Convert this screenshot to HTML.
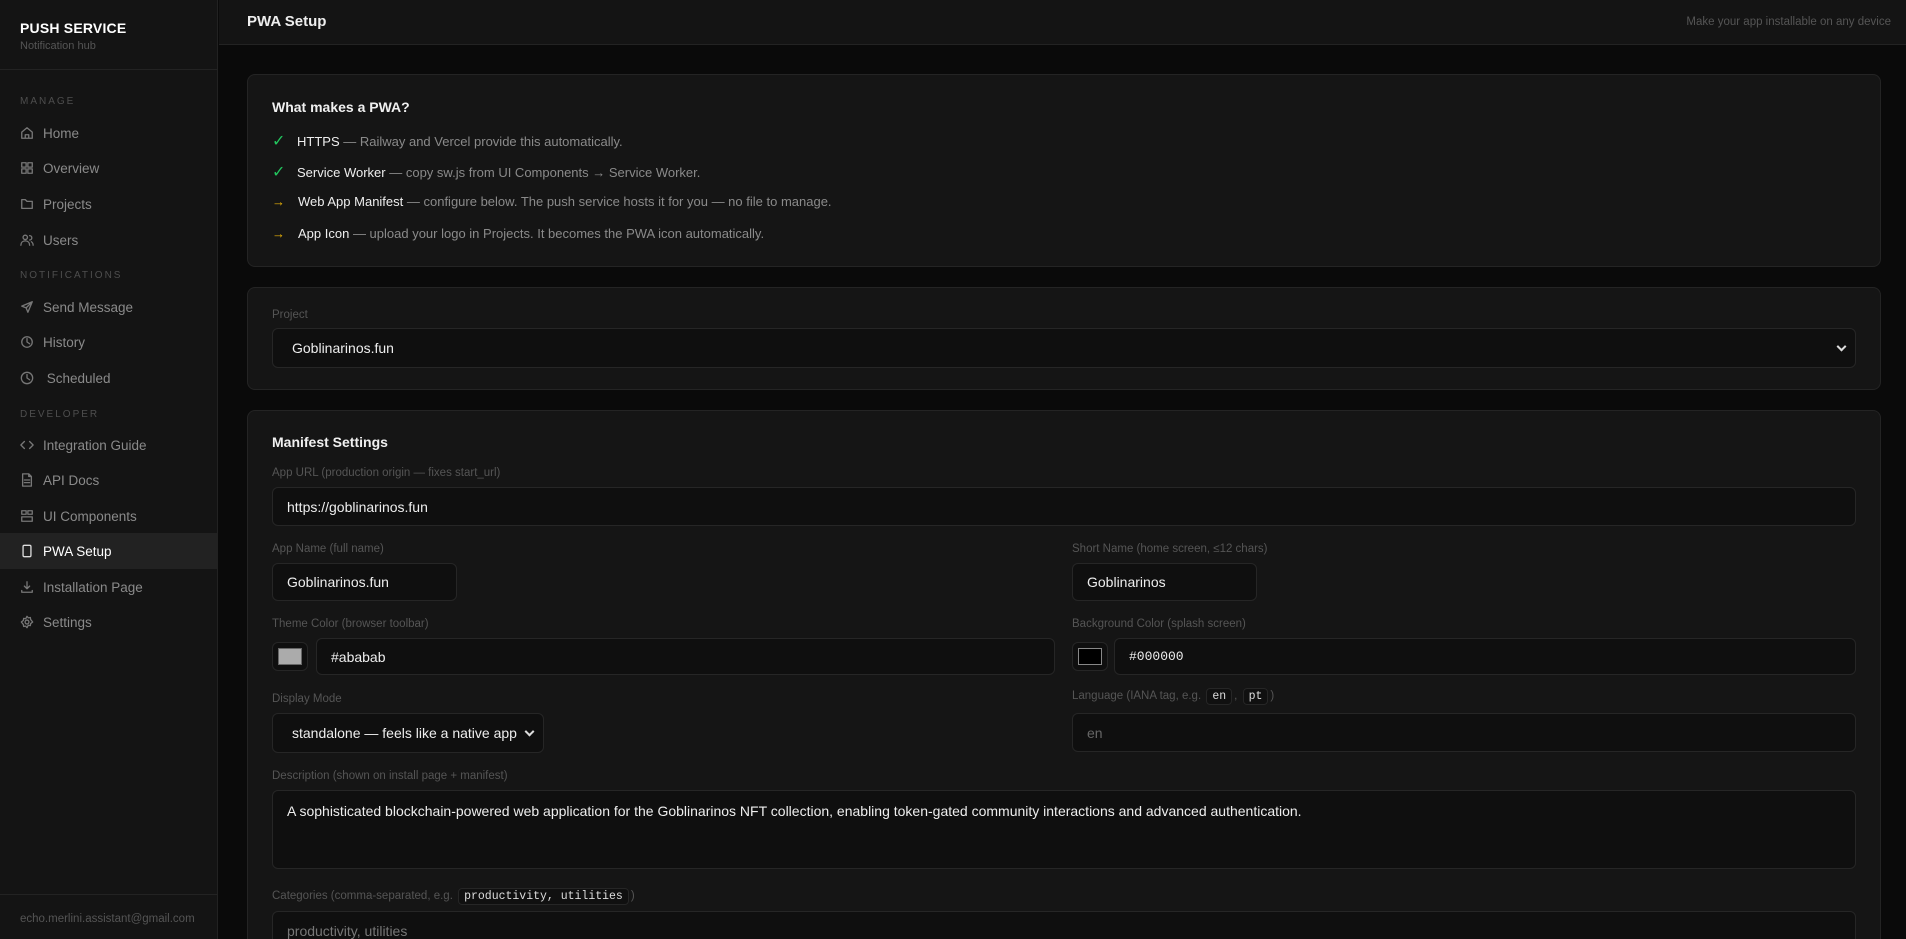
<!DOCTYPE html>
<html style="width:1906px;height:939px;overflow:hidden"><head><meta charset="utf-8"><style>
*{box-sizing:border-box;margin:0;padding:0}
body{width:1906px;height:939px;overflow:hidden;background:#0a0a0a;font-family:"Liberation Sans",sans-serif;color:#e5e5e5;position:relative}
.side{position:absolute;left:0;top:0;width:218px;height:939px;background:#141414;border-right:1px solid #222}
.brand{position:absolute;left:20px;top:20px;font-weight:bold;font-size:14px;color:#fff;letter-spacing:.2px}
.sub{position:absolute;left:20px;top:40px;font-size:11px;color:#555}
.hr{position:absolute;left:0;width:218px;height:1px;background:#232323}
.sec{position:absolute;left:20px;font-size:10px;letter-spacing:2px;color:#4e4e4e}
.nav{position:absolute;left:0;width:218px;height:36px;display:flex;align-items:center;padding-left:20px;font-size:13.5px;color:#8a8a8a}
.nav svg{width:14px;height:14px;margin-right:9px;fill:none;stroke:#777;stroke-width:1.5;stroke-linecap:round;stroke-linejoin:round}
.nav.act{background:#222;color:#fff}.nav.act svg{stroke:#ddd}
.email{position:absolute;left:20px;top:913px;font-size:11.5px;color:#555}
.head{position:absolute;left:219px;top:0;right:0;height:45px;background:#141414;border-bottom:1px solid #232323}
.head h1{position:absolute;left:28px;top:13px;font-size:15px;font-weight:bold;color:#eee}
.head span{position:absolute;right:15px;top:16px;font-size:11.5px;color:#555}
.card{position:absolute;left:247px;width:1634px;background:#151515;border:1px solid #242424;border-radius:8px}
.t{position:absolute;font-size:14px;font-weight:bold;color:#f0f0f0}
.li{position:absolute;left:24px;font-size:13px;color:#8a8a8a;white-space:nowrap}
.li b{font-weight:normal;color:#eee}
.ck{color:#22c55e;font-size:16px;display:inline-block;width:25px}
.ar{color:#eab308;font-size:13px;display:inline-block;width:26px}
.lab{position:absolute;font-size:11.5px;color:#555;white-space:nowrap}
.in{position:absolute;background:#0f0f0f;border:1px solid #262626;border-radius:6px;font-size:14px;color:#eee;padding-left:14px;display:flex;align-items:center}
.code{font-family:"Liberation Mono",monospace;font-size:11.5px;color:#ddd;background:#101010;border:1px solid #262626;border-radius:4px;padding:1px 5px;margin:0 2px}
.chev{position:absolute;right:10px;top:50%;width:7px;height:7px;border-right:2px solid #ddd;border-bottom:2px solid #ddd;transform:translateY(-70%) rotate(45deg)}
</style></head><body>
<div class="side">
<div class="brand">PUSH SERVICE</div>
<div class="sub">Notification hub</div>
<div class="hr" style="top:69px"></div>
<div class="sec" style="top:96px">MANAGE</div>
<div class="nav" style="top:115px"><svg viewBox="0 0 16 16"><path d="M2 7l6-5 6 5v7H2z M6 14v-4h4v4"/></svg>Home</div>
<div class="nav" style="top:150px"><svg viewBox="0 0 16 16"><rect x="2" y="2" width="5" height="5"/><rect x="9" y="2" width="5" height="5"/><rect x="2" y="9" width="5" height="5"/><rect x="9" y="9" width="5" height="5"/></svg>Overview</div>
<div class="nav" style="top:186px"><svg viewBox="0 0 16 16"><path d="M2 3h4l2 2h6v8H2z"/></svg>Projects</div>
<div class="nav" style="top:222px"><svg viewBox="0 0 16 16"><circle cx="6" cy="5" r="2.5"/><path d="M1 14c0-3 2-5 5-5s5 2 5 5M11 3a2.5 2.5 0 010 5M13 10c1.5 1 2 2.5 2 4"/></svg>Users</div>
<div class="sec" style="top:270px">NOTIFICATIONS</div>
<div class="nav" style="top:289px"><svg viewBox="0 0 16 16"><path d="M14 2L2 7l5 2 2 5zM14 2L7 9"/></svg>Send Message</div>
<div class="nav" style="top:324px"><svg viewBox="0 0 16 16"><circle cx="8" cy="8" r="6"/><path d="M8 4v4l3 2"/></svg>History</div>
<div class="nav" style="top:360px"><svg viewBox="0 0 16 16"><circle cx="8" cy="8" r="6.5"/><path d="M8 4v4l3 2"/></svg>&nbsp;Scheduled</div>
<div class="sec" style="top:409px">DEVELOPER</div>
<div class="nav" style="top:427px"><svg viewBox="0 0 16 16"><path d="M5 4L1 8l4 4M11 4l4 4-4 4"/></svg>Integration Guide</div>
<div class="nav" style="top:462px"><svg viewBox="0 0 16 16"><path d="M3 1h7l3 3v11H3zM10 1v3h3M5 8h6M5 11h6"/></svg>API Docs</div>
<div class="nav" style="top:498px"><svg viewBox="0 0 16 16"><rect x="2" y="2" width="5" height="4"/><rect x="9" y="2" width="5" height="4"/><rect x="2" y="9" width="12" height="5"/></svg>UI Components</div>
<div class="nav act" style="top:533px"><svg viewBox="0 0 16 16"><rect x="3.5" y="1.5" width="9" height="13" rx="1.5"/></svg>PWA Setup</div>
<div class="nav" style="top:569px"><svg viewBox="0 0 16 16"><path d="M8 2v8M5 7l3 3 3-3M2 12v2h12v-2"/></svg>Installation Page</div>
<div class="nav" style="top:604px"><svg viewBox="0 0 16 16"><circle cx="8" cy="8" r="2.2"/><path d="M8 1.5l1.5 1.8 2.3-.4.4 2.3L14.5 8l-2.3 1.8-.4 2.3-2.3-.4L8 14.5l-1.5-1.8-2.3.4-.4-2.3L1.5 8l2.3-1.8.4-2.3 2.3.4z"/></svg>Settings</div>
<div class="hr" style="top:894px"></div>
<div class="email">echo.merlini.assistant@gmail.com</div>
</div>
<div class="head"><h1>PWA Setup</h1><span>Make your app installable on any device</span></div>

<div class="card" style="top:74px;height:193px">
<div class="t" style="left:24px;top:24px">What makes a PWA?</div>
<div class="li" style="top:56px"><span class="ck">✓</span><b>HTTPS</b> — Railway and Vercel provide this automatically.</div>
<div class="li" style="top:87px"><span class="ck">✓</span><b>Service Worker</b> — copy sw.js from UI Components → Service Worker.</div>
<div class="li" style="top:119px"><span class="ar">→</span><b>Web App Manifest</b> — configure below. The push service hosts it for you — no file to manage.</div>
<div class="li" style="top:151px"><span class="ar">→</span><b>App Icon</b> — upload your logo in Projects. It becomes the PWA icon automatically.</div>
</div>

<div class="card" style="top:287px;height:103px">
<div class="lab" style="left:24px;top:21px">Project</div>
<div class="in" style="left:24px;top:40px;width:1584px;height:40px;padding-left:19px">Goblinarinos.fun<span class="chev"></span></div>
</div>

<div class="card" style="top:410px;height:529px;border-bottom:none;border-radius:8px 8px 0 0">
<div class="t" style="left:24px;top:23px">Manifest Settings</div>
<div class="lab" style="left:24px;top:56px">App URL (production origin — fixes start_url)</div>
<div class="in" style="left:24px;top:76px;width:1584px;height:39px">https://goblinarinos.fun</div>
<div class="lab" style="left:24px;top:132px">App Name (full name)</div>
<div class="in" style="left:24px;top:152px;width:185px;height:38px">Goblinarinos.fun</div>
<div class="lab" style="left:824px;top:132px">Short Name (home screen, ≤12 chars)</div>
<div class="in" style="left:824px;top:152px;width:185px;height:38px">Goblinarinos</div>
<div class="lab" style="left:24px;top:207px">Theme Color (browser toolbar)</div>
<div class="in" style="left:24px;top:231px;width:36px;height:29px;padding:0;justify-content:center"><div style="width:24px;height:17px;background:#ababab;border:1px solid #666"></div></div>
<div class="in" style="left:68px;top:227px;width:739px;height:37px">#ababab</div>
<div class="lab" style="left:824px;top:207px">Background Color (splash screen)</div>
<div class="in" style="left:824px;top:231px;width:36px;height:29px;padding:0;justify-content:center"><div style="width:24px;height:17px;background:#000;border:1px solid #888"></div></div>
<div class="in" style="left:866px;top:227px;width:742px;height:37px;font-family:'Liberation Mono',monospace;font-size:13px">#000000</div>
<div class="lab" style="left:24px;top:282px">Display Mode</div>
<div class="in" style="left:24px;top:302px;width:272px;height:40px;padding-left:19px">standalone — feels like a native app<span class="chev"></span></div>
<div class="lab" style="left:824px;top:279px">Language (IANA tag, e.g. <span class="code">en</span>, <span class="code">pt</span>)</div>
<div class="in" style="left:824px;top:302px;width:784px;height:39px;color:#666">en</div>
<div class="lab" style="left:24px;top:359px">Description (shown on install page + manifest)</div>
<div class="in" style="left:24px;top:379px;width:1584px;height:79px;align-items:flex-start;padding-top:12px">A sophisticated blockchain-powered web application for the Goblinarinos NFT collection, enabling token-gated community interactions and advanced authentication.</div>
<div class="lab" style="left:24px;top:479px">Categories (comma-separated, e.g. <span class="code">productivity, utilities</span>)</div>
<div class="in" style="left:24px;top:500px;width:1584px;height:40px;color:#777">productivity, utilities</div>
</div>
</body></html>
